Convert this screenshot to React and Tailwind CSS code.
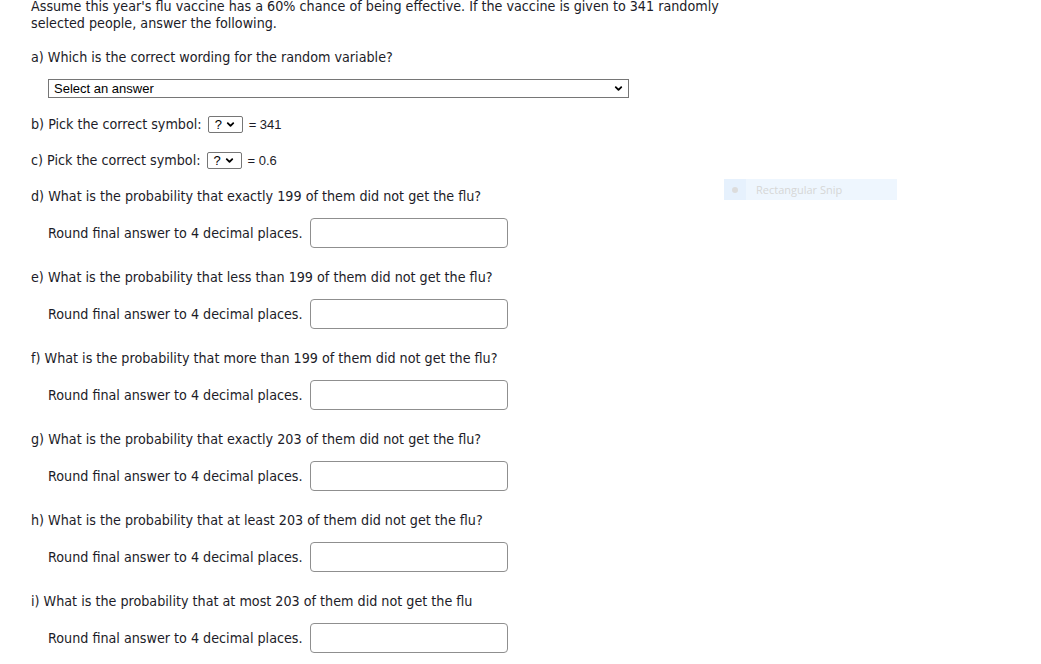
import { ChevronDown } from 'lucide-react';

const questions = [
  { id: 'd', text: 'd) What is the probability that exactly 199 of them did not get the flu?' },
  { id: 'e', text: 'e) What is the probability that less than 199 of them did not get the flu?' },
  { id: 'f', text: 'f) What is the probability that more than 199 of them did not get the flu?' },
  { id: 'g', text: 'g) What is the probability that exactly 203 of them did not get the flu?' },
  { id: 'h', text: 'h) What is the probability that at least 203 of them did not get the flu?' },
  { id: 'i', text: 'i) What is the probability that at most 203 of them did not get the flu' },
];

function SymbolSelect() {
  return (
    <span className="inline-flex items-center h-[17px] w-[35px] border border-[#767676] rounded-[2px] bg-white px-[6px] justify-between font-['Liberation_Sans',Arial,sans-serif] text-[13px] text-black [font-stretch:normal]">
      <span>?</span>
      <ChevronDown className="w-[11px] h-[11px]" strokeWidth={4} />
    </span>
  );
}

function AnswerRow() {
  return (
    <div className="flex items-center pl-[48px] h-[30px]">
      <span>Round final answer to 4 decimal places.</span>
      <input
        type="text"
        className="ml-[7px] w-[198px] h-[30px] border border-[#8f8f8f] rounded-[4px] bg-white outline-none"
      />
    </div>
  );
}

export default function App() {
  return (
    <div className="relative w-[1041px] h-[664px] overflow-hidden bg-white text-[14.2px] leading-[17px] text-[#1c1c28] font-['DejaVu_Sans_Condensed','DejaVu_Sans',sans-serif] [font-stretch:condensed]">
      <div className="pl-[31px] mt-[-2px]">
        <p>Assume this year's flu vaccine has a 60% chance of being effective. If the vaccine is given to 341 randomly</p>
        <p>selected people, answer the following.</p>
      </div>

      <p className="pl-[31px] mt-[17px]">a) Which is the correct wording for the random variable?</p>

      <div className="pl-[48px] mt-[13px]">
        <div className="flex items-center justify-between w-[581px] h-[19px] border border-[#767676] bg-white pl-[5px] pr-[4px] font-['Liberation_Sans',Arial,sans-serif] text-[13px] text-black [font-stretch:normal]">
          <span>Select an answer</span>
          <ChevronDown className="w-[11px] h-[11px]" strokeWidth={4} />
        </div>
      </div>

      <div className="pl-[31px] mt-[18px] flex items-center gap-[6px]">
        <span>b) Pick the correct symbol:</span>
        <SymbolSelect />
        <span className="font-['Liberation_Sans',Arial,sans-serif] text-[13px] [font-stretch:normal]">= 341</span>
      </div>

      <div className="pl-[31px] mt-[19px] flex items-center gap-[6px]">
        <span>c) Pick the correct symbol:</span>
        <SymbolSelect />
        <span className="font-['Liberation_Sans',Arial,sans-serif] text-[13px] [font-stretch:normal]">= 0.6</span>
      </div>

      <div className="flex flex-col mt-[19px]">
        {questions.map((q) => (
          <div key={q.id} className="flex flex-col mb-[21px]">
            <p className="pl-[31px]">{q.text}</p>
            <div className="mt-[13px]">
              <AnswerRow />
            </div>
          </div>
        ))}
      </div>

      <div className="absolute left-[724px] top-[179px] w-[173px] h-[21px] flex items-center bg-[#eef6fe] [font-stretch:normal]">
        <div className="w-[22px] h-full flex items-center justify-center bg-[#e6f1fd]">
          <span className="w-[6px] h-[6px] rounded-full bg-[#dcdcdc]" />
        </div>
        <span className="ml-[10px] text-[11px] text-[#d6d6d6] font-['Open_Sans',sans-serif]">Rectangular Snip</span>
      </div>
    </div>
  );
}
